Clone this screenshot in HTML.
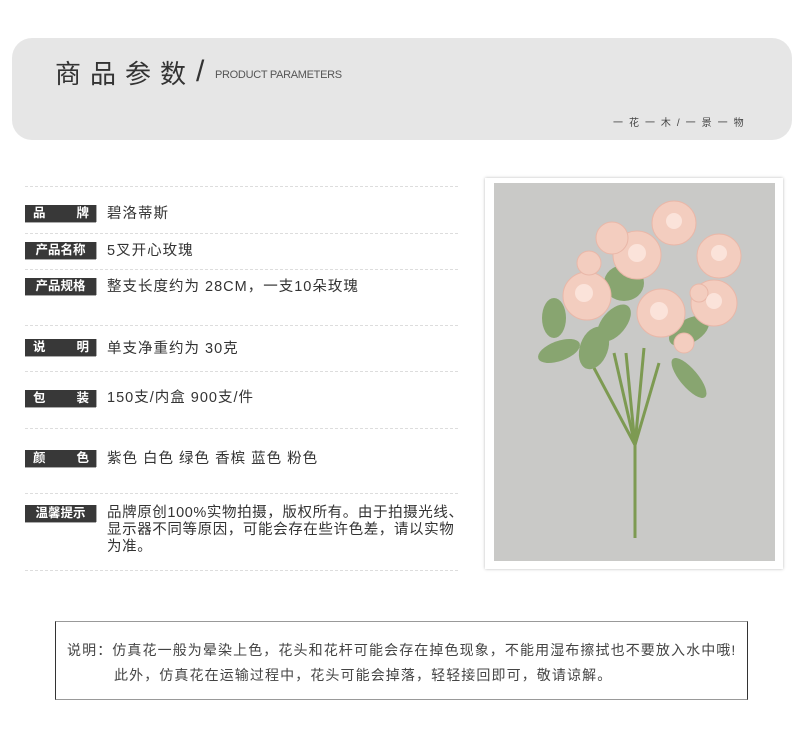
<!DOCTYPE html>
<html><head><meta charset="utf-8"><style>
*{margin:0;padding:0;box-sizing:border-box}
body{width:800px;height:729px;background:#fff;position:relative;overflow:hidden;font-family:"Liberation Sans","Noto Sans CJK SC",sans-serif;color:#333}
.hdr{position:absolute;left:12px;top:38px;width:780px;height:102px;background:#e6e6e6;border-radius:20px}
.t1{position:absolute;left:55px;top:54px;font-size:26px;letter-spacing:9px;color:#333}
.sl{position:absolute;left:196px;top:55px;font-size:30px;color:#333;font-weight:300}
.t2{position:absolute;left:215px;top:69px;font-size:11px;color:#555;letter-spacing:-.3px}
.t3{position:absolute;left:613px;top:114px;font-size:10px;color:#444;letter-spacing:1.6px}
.dl{position:absolute;left:25px;width:433px;border-top:1px dashed #ddd}
.lb{position:absolute;left:25px;width:71px;height:17px;background:#383838;color:#fff;font-size:12.5px;font-weight:bold;line-height:17px;box-shadow:0 1px 0 #aaa,1px 0 0 #aaa;display:flex;justify-content:space-between;padding:0 7px 0 8px}
.lb.f{justify-content:center;padding:0;letter-spacing:0}
.v{position:absolute;left:107px;font-size:14.5px;color:#333;line-height:17px;letter-spacing:1px;white-space:nowrap}
.pic{position:absolute;left:485px;top:178px;width:298px;height:391px;background:#fff;box-shadow:0 0 3px #bbb}
.pic svg{position:absolute;left:9px;top:5px}
.note{position:absolute;left:55px;top:621px;width:693px;height:79px;border:1px solid #999;border-left-color:#333;border-right-color:#333}
.n1{position:absolute;left:67px;top:640px;font-size:14px;color:#444;letter-spacing:1.1px}
.n2{position:absolute;left:114px;top:665px;font-size:14px;color:#444;letter-spacing:1.1px}
</style></head><body>
<div class="hdr"></div>
<div class="t1">商品参数</div>
<div class="sl">/</div>
<div class="t2">PRODUCT PARAMETERS</div>
<div class="t3">一 花 一 木 / 一 景 一 物</div>

<div class="dl" style="top:186px"></div>
<div class="lb" style="top:205px"><span>品</span><span>牌</span></div><div class="v" style="top:206px">碧洛蒂斯</div>
<div class="dl" style="top:233px"></div>
<div class="lb f" style="top:242px">产品名称</div><div class="v" style="top:243px">5叉开心玫瑰</div>
<div class="dl" style="top:269px"></div>
<div class="lb f" style="top:278px">产品规格</div><div class="v" style="top:279px">整支长度约为 28CM，一支10朵玫瑰</div>
<div class="dl" style="top:325px"></div>
<div class="lb" style="top:339px"><span>说</span><span>明</span></div><div class="v" style="top:341px">单支净重约为 30克</div>
<div class="dl" style="top:371px"></div>
<div class="lb" style="top:390px"><span>包</span><span>装</span></div><div class="v" style="top:390px">150支/内盒 900支/件</div>
<div class="dl" style="top:428px"></div>
<div class="lb" style="top:450px"><span>颜</span><span>色</span></div><div class="v" style="top:451px">紫色 白色 绿色 香槟 蓝色 粉色</div>
<div class="dl" style="top:493px"></div>
<div class="lb f" style="top:505px">温馨提示</div><div class="v" style="top:505px;letter-spacing:.6px">品牌原创100%实物拍摄，版权所有。由于拍摄光线、<br>显示器不同等原因，可能会存在些许色差，请以实物<br>为准。</div>
<div class="dl" style="top:570px"></div>

<div class="pic"><svg width="281" height="378" viewBox="0 0 281 378">
<rect width="281" height="378" fill="#c9c9c7"/>
<g stroke="#7d9a52" stroke-width="3" fill="none">
<path d="M141 355 L141 260"/><path d="M141 262 L120 170"/><path d="M141 262 L132 170"/><path d="M141 262 L150 165"/><path d="M141 262 L165 180"/><path d="M141 262 L100 185"/>
</g>
<g fill="#88a570">
<ellipse cx="65" cy="168" rx="22" ry="10" transform="rotate(-20 65 168)"/>
<ellipse cx="195" cy="195" rx="25" ry="9" transform="rotate(50 195 195)"/>
<ellipse cx="120" cy="140" rx="22" ry="12" transform="rotate(-50 120 140)"/>
<ellipse cx="60" cy="135" rx="12" ry="20"/>
<ellipse cx="100" cy="165" rx="14" ry="22" transform="rotate(20 100 165)"/>
<ellipse cx="195" cy="148" rx="22" ry="12" transform="rotate(-30 195 148)"/>
<ellipse cx="130" cy="100" rx="20" ry="18"/>
</g>
<g fill="#f3cdbf" stroke="#e9b7a8" stroke-width="1">
<circle cx="93" cy="113" r="24"/><circle cx="143" cy="72" r="24"/>
<circle cx="180" cy="40" r="22"/><circle cx="225" cy="73" r="22"/>
<circle cx="220" cy="120" r="23"/><circle cx="167" cy="130" r="24"/>
<circle cx="118" cy="55" r="16"/><circle cx="95" cy="80" r="12"/>
<circle cx="190" cy="160" r="10"/><circle cx="205" cy="110" r="9"/>
</g>
<g fill="#fbe3da">
<circle cx="90" cy="110" r="9"/><circle cx="143" cy="70" r="9"/><circle cx="180" cy="38" r="8"/><circle cx="225" cy="70" r="8"/><circle cx="220" cy="118" r="8"/><circle cx="165" cy="128" r="9"/>
</g>
</svg></div>

<div class="note"></div>
<div class="n1">说明：仿真花一般为晕染上色，花头和花杆可能会存在掉色现象，不能用湿布擦拭也不要放入水中哦!</div>
<div class="n2">此外，仿真花在运输过程中，花头可能会掉落，轻轻接回即可，敬请谅解。</div>
</body></html>
